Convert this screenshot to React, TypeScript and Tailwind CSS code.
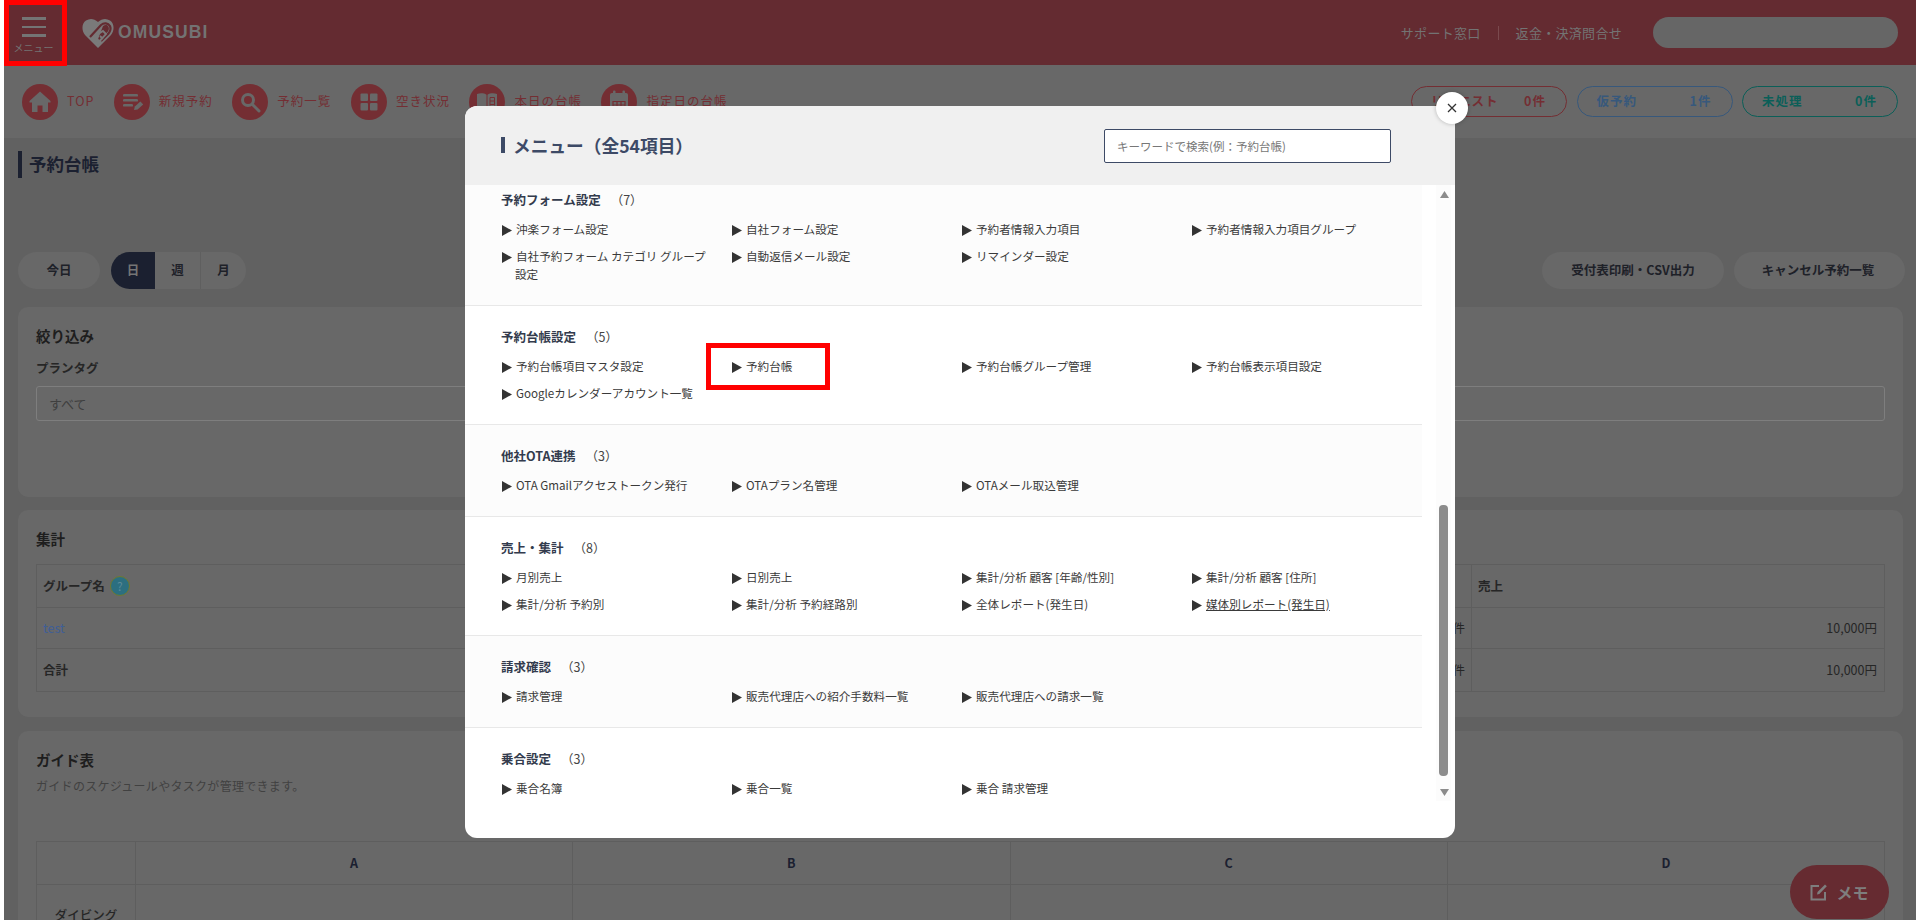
import React from "react";

const sections = [
  {
    title: "予約フォーム設定",
    count: 7,
    items: ["沖楽フォーム設定", "自社フォーム設定", "予約者情報入力項目", "予約者情報入力項目グループ", "自社予約フォーム カテゴリ グループ設定", "自動返信メール設定", "リマインダー設定"],
  },
  {
    title: "予約台帳設定",
    count: 5,
    items: ["予約台帳項目マスタ設定", "予約台帳", "予約台帳グループ管理", "予約台帳表示項目設定", "Googleカレンダーアカウント一覧"],
  },
  { title: "他社OTA連携", count: 3, items: ["OTA Gmailアクセストークン発行", "OTAプラン名管理", "OTAメール取込管理"] },
  {
    title: "売上・集計",
    count: 8,
    items: ["月別売上", "日別売上", "集計/分析 顧客 [年齢/性別]", "集計/分析 顧客 [住所]", "集計/分析 予約別", "集計/分析 予約経路別", "全体レポート(発生日)", "媒体別レポート(発生日)"],
  },
  { title: "請求確認", count: 3, items: ["請求管理", "販売代理店への紹介手数料一覧", "販売代理店への請求一覧"] },
  { title: "乗合設定", count: 3, items: ["乗合名簿", "乗合一覧", "乗合 請求管理"] },
];

const ICON = "#686868";
const navItems = [
  {
    label: "TOP",
    icon: <path d="M18 7.5 7.500 17v1.500h2.500V28h5.500v-6.500h5V28H26v-9.500h2.500V17z" fill={ICON} />,
  },
  {
    label: "新規予約",
    icon: (
      <g fill={ICON}>
        <rect x="9" y="10" width="15" height="2.600" rx="1.200" />
        <rect x="9" y="15" width="15" height="2.600" rx="1.200" />
        <rect x="9" y="20" width="10" height="2.600" rx="1.200" />
        <path d="M20 26l.8-3.600 5.600-5 2.800 3-5.600 5.200z" />
      </g>
    ),
  },
  {
    label: "予約一覧",
    icon: (
      <g fill="none" stroke={ICON}>
        <circle cx="16" cy="16" r="5.500" strokeWidth="3" />
        <path d="M20.500 20.500 27 27" strokeWidth="3" strokeLinecap="round" />
      </g>
    ),
  },
  {
    label: "空き状況",
    icon: (
      <g fill={ICON}>
        <rect x="9.500" y="9.500" width="7.500" height="7.500" rx="1" />
        <rect x="19" y="9.500" width="7.500" height="7.500" rx="1" />
        <rect x="9.500" y="19" width="7.500" height="7.500" rx="1" />
        <rect x="19" y="19" width="7.500" height="7.500" rx="1" />
      </g>
    ),
  },
  {
    label: "本日の台帳",
    icon: (
      <g>
        <path d="M8 10c3-1 7-1 9.500.8V27c-2.500-1.500-6.500-1.500-9.500-.8z" fill={ICON} />
        <path d="M18.500 10.800C21 9 25 9 28 10v16.200c-3-.7-7-.7-9.500.8z" fill={ICON} />
        <path d="M21 13.500h4.500M21 17h4.500M21 20.500h4.500M21 13.500v8M25.500 13.500v8" stroke="#742e33" strokeWidth="1" fill="none" />
      </g>
    ),
  },
  {
    label: "指定日の台帳",
    icon: (
      <g>
        <rect x="9" y="9" width="18" height="18.500" rx="2" fill={ICON} />
        <rect x="12" y="6.500" width="2.500" height="4" rx="1" fill={ICON} />
        <rect x="21.500" y="6.500" width="2.500" height="4" rx="1" fill={ICON} />
        <path d="M12 17.500h12v7H12zM16 17.500v7M20 17.500v7M12 21h12" stroke="#742e33" strokeWidth="1.200" fill="none" />
      </g>
    ),
  },
];

const pills = [
  { label: "リクエスト", value: "0件", cls: "border-[#742e33] text-[#742e33]" },
  { label: "仮予約", value: "1件", cls: "border-[#37587c] text-[#37587c]" },
  { label: "未処理", value: "0件", cls: "border-[#0b5f58] text-[#0b5f58]" },
];

const Card = ({ className, children }: { className: string; children: React.ReactNode }) => (
  <section className={`mr-[13px] ml-[14px] rounded-[10px] bg-[#686868] px-[18px] ${className}`}>{children}</section>
);

const MenuSection = ({ section, index }: { section: (typeof sections)[number]; index: number }) => (
  <div className={`border-[#e8e8e8] pt-[21px] pb-[22px] pl-[36px] ${index === sections.length - 1 ? "" : "border-b"} ${index % 2 === 0 ? "bg-[#fcfcfc]" : "bg-white"} ${index === 0 ? "-mt-[16px]" : ""}`}>
    <div className="mb-[10px] flex h-[20px] items-center text-[12.5px] text-[#333b4d]">
      <b className="font-bold">{section.title}</b>
      <span className="ml-[10px] text-[#444]">（{section.count}）</span>
    </div>
    <div className="grid grid-cols-[repeat(4,230px)] gap-y-[9px] text-[11.6px] leading-[18px] text-[#3a3a3a]">
      {section.items.map((item) => (
        <div key={item} className="w-[212px] pl-[14px] -indent-[14px]">
          <a className={item.startsWith("媒体別") ? "underline" : ""}>
            <svg width="10" height="11" viewBox="0 0 10 11" className="mr-[4px] ml-[1px] inline-block align-[-1.5px]">
              <path d="M0 0 10 5.500 0 11z" fill="#333" />
            </svg>
            {item}
          </a>
        </div>
      ))}
    </div>
  </div>
);

export default function App() {
  return (
    <div className="relative h-[920px] w-[1920px] overflow-hidden bg-white px-[4px] font-['Noto_Sans_CJK_JP',sans-serif]">
      <div className="relative h-[920px] overflow-hidden bg-[#616161]">
        <header className="flex h-[65px] items-center bg-[#642b31] pr-[18px] text-[#737373]">
          <button className="flex h-[65px] w-[59px] flex-col items-center pt-[17px]">
            <span className="h-[2.500px] w-[24px] bg-[#747474]" />
            <span className="mt-[6px] h-[2.500px] w-[24px] bg-[#747474]" />
            <span className="mt-[6px] h-[2.500px] w-[24px] bg-[#747474]" />
            <span className="mt-[4px] text-[10px] leading-[14px]">メニュー</span>
          </button>
          <svg width="32" height="30" viewBox="0 0 32 30" className="ml-[19px] shrink-0">
            <path d="M16 30 3 17C-1 12 0 5 4 2.500 8 0 12 .5 16 4c4-3.500 8-4 12-1.500 4 2.500 5 9.500 1 14.500z" fill="#7a7a7a" />
            <path d="M21 8c2.500-1.500 4.500-1 5.500 .8.800 2 .2 3.600-1 5.200L15 24z" fill="#642b31" />
            <path d="M8 19 19 7c3-2.500 7-2 9 1 1 2.500 .5 5-1.500 7.500L19 23" fill="none" stroke="#642b31" strokeWidth="2.200" />
            <path d="M13 18l8-5 3 3-8 9zM15 21l3 3M18 18l3 3" fill="none" stroke="#7a7a7a" strokeWidth="1.800" />
          </svg>
          <span className="ml-[4px] font-['Liberation_Sans',sans-serif] text-[17.500px] font-bold tracking-[1.100px]">OMUSUBI</span>
          <div className="ml-auto flex items-center text-[13px] tracking-[.3px]">
            <span>サポート窓口</span>
            <span className="mx-[17px] h-[14px] w-px bg-[#7a4a4e]" />
            <span>返金・決済問合せ</span>
          </div>
          <div className="ml-[31px] h-[31px] w-[245px] rounded-full bg-[#666]" />
        </header>

        <nav className="flex h-[73px] items-center justify-between bg-[#686868] pr-[18px] pl-[18px]">
          <div className="flex items-center gap-[19.500px]">
            {navItems.map((item) => (
              <a key={item.label} className="flex items-center gap-[9px] text-[12.500px] tracking-[1px] text-[#742e33]">
                <svg width="36" height="36" viewBox="0 0 36 36">
                  <circle cx="18" cy="18" r="18" fill="#742e33" />
                  {item.icon}
                </svg>
                {item.label}
              </a>
            ))}
          </div>
          <div className="flex gap-[9.500px]">
            {pills.map((p) => (
              <div key={p.label} className={`flex h-[31px] w-[156px] items-center justify-between rounded-full border pr-[20px] pl-[19px] text-[12.500px] font-bold tracking-[1px] ${p.cls}`}>
                <span>{p.label}</span>
                <span>{p.value}</span>
              </div>
            ))}
          </div>
        </nav>

        <main className="pt-[13px]">
          <h1 className="ml-[14px] h-[27px] border-l-[4px] border-[#1b2030] pl-[7px] text-[17.500px] leading-[25px] font-bold text-[#1b2030]">予約台帳</h1>

          <div className="mt-[74px] mr-[11px] ml-[14px] flex h-[37px] items-center text-[12.500px] font-bold text-[#1e2128]">
            <button className="h-full w-[82px] rounded-full bg-[#686868]">今日</button>
            <div className="ml-[11px] flex h-full w-[135px] overflow-hidden rounded-full bg-[#686868]">
              <span className="flex w-[44px] items-center justify-center bg-[#1b2030] text-[#757575]">日</span>
              <span className="flex w-[46px] items-center justify-center border-r border-[#5f5f5f]">週</span>
              <span className="flex flex-1 items-center justify-center">月</span>
            </div>
            <button className="ml-auto h-full w-[182px] rounded-full bg-[#686868]">受付表印刷・CSV出力</button>
            <button className="ml-[10px] h-full w-[171px] rounded-full bg-[#686868] pr-[3px]">キャンセル予約一覧</button>
          </div>

          <Card className="mt-[18px] h-[190px] pt-[19px]">
            <h2 className="text-[14.500px] leading-[20px] font-bold text-[#1e1e1e]">絞り込み</h2>
            <p className="mt-[13px] text-[12.500px] leading-[18px] font-bold text-[#262626]">プランタグ</p>
            <div className="mt-[9px] flex h-[35px] items-center rounded-[3px] border border-[#7e7e7e] px-[12px] text-[13px] text-[#3f3f3f]">すべて</div>
          </Card>

          <Card className="mt-[13px] h-[207px] pt-[19px]">
            <h2 className="text-[14.500px] leading-[20px] font-bold text-[#1e1e1e]">集計</h2>
            <table className="mt-[15px] w-full table-fixed border-collapse text-[12.500px] text-[#262626]">
              <colgroup>
                <col className="w-[700px]" />
                <col />
                <col className="w-[413px]" />
              </colgroup>
              <tbody>
                <tr className="h-[43px] font-bold">
                  <td className="border border-[#5e5e5e] px-[6px]">
                    <span className="inline-flex items-center">
                      グループ名
                      <span className="ml-[5px] flex h-[20px] w-[20px] items-center justify-center rounded-full border border-[#6f7a2f] bg-[#2c6f80] text-[12px] font-normal text-[#5a8a98]">?</span>
                    </span>
                  </td>
                  <td className="border border-[#5e5e5e] px-[6px]">予約件数</td>
                  <td className="border border-[#5e5e5e] px-[6px]">売上</td>
                </tr>
                <tr className="h-[41px]">
                  <td className="border border-[#5e5e5e] px-[6px] text-[#3f5e96]">test</td>
                  <td className="border border-[#5e5e5e] px-[6px] text-right">1件</td>
                  <td className="border border-[#5e5e5e] px-[7px] text-right">10,000円</td>
                </tr>
                <tr className="h-[43px]">
                  <td className="border border-[#5e5e5e] px-[6px] font-bold">合計</td>
                  <td className="border border-[#5e5e5e] px-[6px] text-right">1件</td>
                  <td className="border border-[#5e5e5e] px-[7px] text-right">10,000円</td>
                </tr>
              </tbody>
            </table>
          </Card>

          <Card className="mt-[14px] h-[400px] pt-[19px]">
            <h2 className="text-[14.500px] leading-[20px] font-bold text-[#1e1e1e]">ガイド表</h2>
            <p className="mt-[7px] text-[12px] leading-[18px] tracking-[.3px] text-[#414141]">ガイドのスケジュールやタスクが管理できます。</p>
            <table className="mt-[46px] w-full table-fixed border-collapse text-[12.500px] text-[#1b2030]">
              <colgroup>
                <col className="w-[99px]" />
                <col />
                <col />
                <col />
                <col />
              </colgroup>
              <tbody>
                <tr className="h-[43px] text-center font-bold">
                  <td className="border border-[#5e5e5e]" />
                  <td className="border border-[#5e5e5e]">A</td>
                  <td className="border border-[#5e5e5e]">B</td>
                  <td className="border border-[#5e5e5e]">C</td>
                  <td className="border border-[#5e5e5e]">D</td>
                </tr>
                <tr className="h-[62px] text-center">
                  <td className="border border-[#5e5e5e] font-medium text-[#262626]">ダイビング</td>
                  <td className="border border-[#5e5e5e]" />
                  <td className="border border-[#5e5e5e]" />
                  <td className="border border-[#5e5e5e]" />
                  <td className="border border-[#5e5e5e]" />
                </tr>
              </tbody>
            </table>
          </Card>
        </main>

        <button className="absolute top-[865px] left-[1786px] flex h-[54px] w-[99px] items-center justify-center gap-[8px] rounded-full bg-[#662b31] text-[16px] font-bold text-[#7e7e7e]">
          <svg width="18" height="18" viewBox="0 0 18 18" fill="none" stroke="#7e7e7e" strokeWidth="2">
            <path d="M9 3H1.500v13.500H15V9" />
            <path d="M7 11.500l.5-2.500L15 1.500l1.800 1.800L9.300 11z" fill="#7e7e7e" stroke="none" />
          </svg>
          メモ
        </button>

        {/* モーダル */}
        <div className="absolute top-[106px] left-[461px] h-[732px] w-[990px] rounded-[12px] bg-white">
          <div className="flex h-[79px] items-center justify-between rounded-t-[12px] bg-[#f0f0f0] pr-[64px] pb-[2px] pl-[36px]">
            <h2 className="border-l-[4px] border-[#3d4a66] pl-[8px] text-[17.700px] leading-[16px] font-bold text-[#3d4a66]">メニュー（全54項目）</h2>
            <input
              readOnly
              placeholder="キーワードで検索(例：予約台帳)"
              className="mt-[2px] h-[34px] w-[287px] rounded-[2px] border border-[#3d4a66] bg-white px-[12px] text-[11.500px] placeholder:text-[#777]"
            />
          </div>
          <div className="flex h-[640px] items-start">
            <div className="h-full w-[957px] overflow-hidden">
              {sections.map((s, i) => (
                <MenuSection key={s.title} section={s} index={i} />
              ))}
            </div>
            <div className="ml-[14px] flex h-[616px] w-[15px] flex-col items-center bg-[#fcfcfc] pt-[6px]">
              <svg width="9" height="7" viewBox="0 0 9 7" className="ml-[1px]">
                <path d="M4.500 0 9 7H0z" fill="#8c8c8c" />
              </svg>
              <div className="mt-[307px] h-[271px] w-[9px] shrink-0 rounded-[4px] bg-[#8c8c8c]" />
              <svg width="9" height="7" viewBox="0 0 9 7" className="mt-[13px] ml-[1px]">
                <path d="M0 0h9L4.500 7z" fill="#8c8c8c" />
              </svg>
            </div>
          </div>
          <button className="absolute -top-[14px] -right-[13px] flex h-[32px] w-[32px] items-center justify-center rounded-full bg-white shadow-[0_0_4px_rgba(0,0,0,.25)]">
            <svg width="10" height="10" viewBox="0 0 10 10" stroke="#333" strokeWidth="1.300">
              <path d="M1 1l8 8M9 1 1 9" />
            </svg>
          </button>
        </div>

        {/* 注釈の赤枠 */}
        <div className="absolute top-0 left-0 h-[66px] w-[63px] border-[5px] border-[#ff0000]" />
        <div className="absolute top-[343px] left-[702px] h-[47px] w-[124px] border-[5px] border-[#ff0000]" />
      </div>
    </div>
  );
}
